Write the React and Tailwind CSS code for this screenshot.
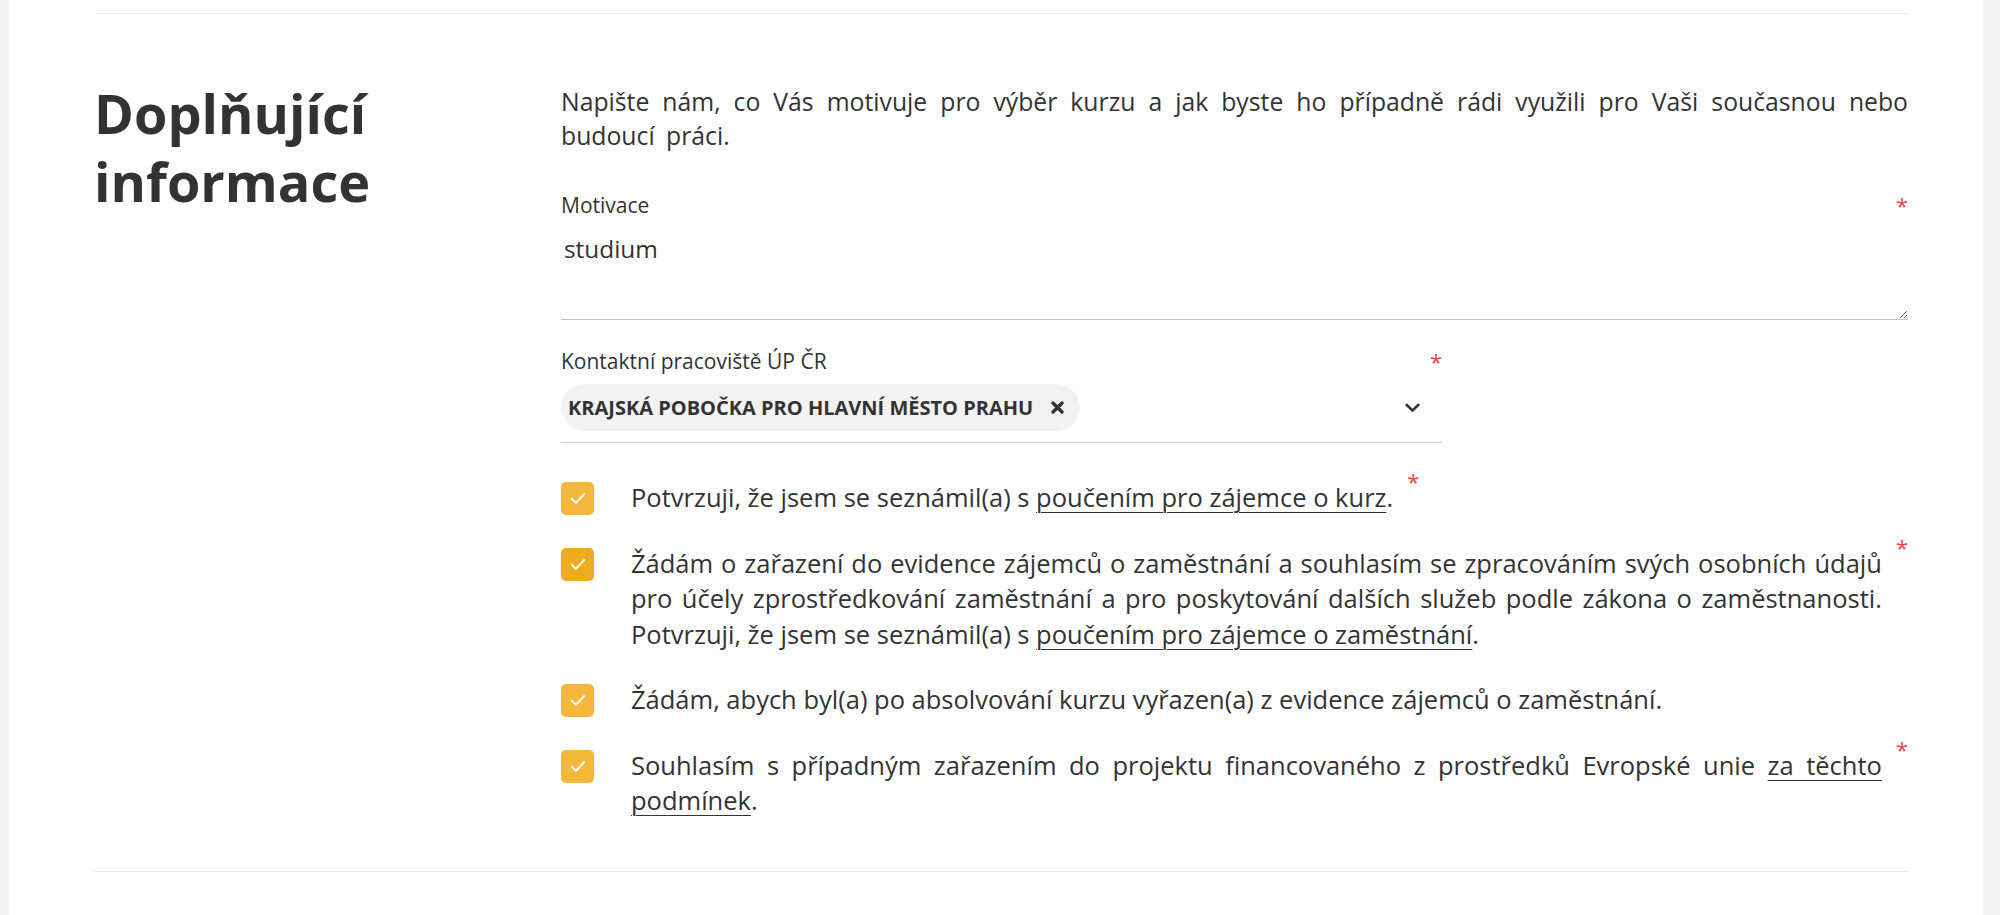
import { useState } from "react";

const Zaskrtnuti = ({ tmavsi }) => (
  <span
    className={`mt-[2px] flex h-[33px] w-[33px] shrink-0 items-center justify-center rounded-[5px] ${
      tmavsi ? "bg-[#eeab1f]" : "bg-[#f2b73b]"
    }`}
  >
    <svg width="16" height="13" viewBox="0 0 16 13" fill="none">
      <path d="M1.8 6.8 5.9 10.9 14.2 2" stroke="white" strokeWidth="2" strokeLinecap="round" strokeLinejoin="round" />
    </svg>
  </span>
);

const Odkaz = ({ children }) => (
  <a href="#" className="underline decoration-1 underline-offset-[5px]">
    {children}
  </a>
);

const Souhlas = ({ povinne, tmavsi, children }) => (
  <label className="flex items-start">
    <Zaskrtnuti tmavsi={tmavsi} />
    <div className="ml-[37px] text-justify text-[25.5px] leading-[35.5px]">{children}</div>
    {povinne && <span className="-mt-[13px] ml-[14px] shrink-0 text-[22px] leading-[28px] text-[#e84545]">*</span>}
  </label>
);

export default function App() {
  const [motivace, setMotivace] = useState("studium");

  return (
    <div className="flex min-h-[915px] bg-[#f1f1f1] font-['Open_Sans',sans-serif] text-[#333]">
      <div className="ml-[9px] w-[1974px] bg-white pt-[13px] pl-[85px] pr-[75px]">
        <section className="flex border-t border-b border-[#ececec] pt-[65px] pb-[52px]">
          {/* Levý sloupec s nadpisem */}
          <div className="w-[467px] shrink-0">
            <h2 className="text-[54px] font-bold leading-[68px]">
              Doplňující
              <br />
              informace
            </h2>
          </div>

          {/* Pravý sloupec s formulářem */}
          <div className="flex-1 pt-[6px]">
            <p className="text-justify text-[24.75px] leading-[34px] [word-spacing:5px]">
              Napište nám, co Vás motivuje pro výběr kurzu a jak byste ho případně rádi využili pro Vaši současnou nebo budoucí práci.
            </p>

            <div className="mt-[38px]">
              <div className="flex justify-between text-[21px] leading-[28px]">
                <span>Motivace</span>
                <span className="text-[22px] text-[#e84545]">*</span>
              </div>
              <textarea
                value={motivace}
                onChange={(e) => setMotivace(e.target.value)}
                className="block h-[101px] w-full resize-y border-b border-[#c4c4c4] bg-transparent px-[3px] pt-[12px] text-[24.4px] leading-[36px] text-[#333] outline-none"
              />
            </div>

            <div className="mt-[27px] w-[881px]">
              <div className="flex justify-between text-[21px] leading-[28px]">
                <span>Kontaktní pracoviště ÚP ČR</span>
                <span className="text-[22px] text-[#e84545]">*</span>
              </div>
              <div className="flex items-center border-b border-[#cfcfcf] pt-[9px] pb-[11px]">
                <span className="flex h-[47px] items-center rounded-full bg-[#f2f2f2] pl-[7px] pr-[16px] text-[20px] font-bold leading-[28px]">
                  KRAJSKÁ POBOČKA PRO HLAVNÍ MĚSTO PRAHU
                  <svg className="ml-[18px]" width="13" height="13" viewBox="0 0 13 13" fill="none">
                    <path d="M2 2 11 11M11 2 2 11" stroke="#333" strokeWidth="3.4" strokeLinecap="round" />
                  </svg>
                </span>
                <svg className="ml-auto mr-[22px]" width="15" height="10" viewBox="0 0 15 10" fill="none">
                  <path d="M1.6 1.8 7.5 7.6 13.4 1.8" stroke="#333" strokeWidth="2.6" strokeLinecap="round" strokeLinejoin="round" />
                </svg>
              </div>
            </div>

            <div className="mt-[37px] flex flex-col gap-[30px]">
              <Souhlas povinne>
                Potvrzuji, že jsem se seznámil(a) s <Odkaz>poučením pro zájemce o kurz</Odkaz>.
              </Souhlas>
              <Souhlas povinne tmavsi>
                Žádám o zařazení do evidence zájemců o zaměstnání a souhlasím se zpracováním svých osobních údajů pro účely
                zprostředkování zaměstnání a pro poskytování dalších služeb podle zákona o zaměstnanosti. Potvrzuji, že jsem se
                seznámil(a) s <Odkaz>poučením pro zájemce o zaměstnání</Odkaz>.
              </Souhlas>
              <Souhlas>Žádám, abych byl(a) po absolvování kurzu vyřazen(a) z evidence zájemců o zaměstnání.</Souhlas>
              <Souhlas povinne>
                Souhlasím s případným zařazením do projektu financovaného z prostředků Evropské unie{" "}
                <Odkaz>za těchto podmínek</Odkaz>.
              </Souhlas>
            </div>
          </div>
        </section>
      </div>
    </div>
  );
}
